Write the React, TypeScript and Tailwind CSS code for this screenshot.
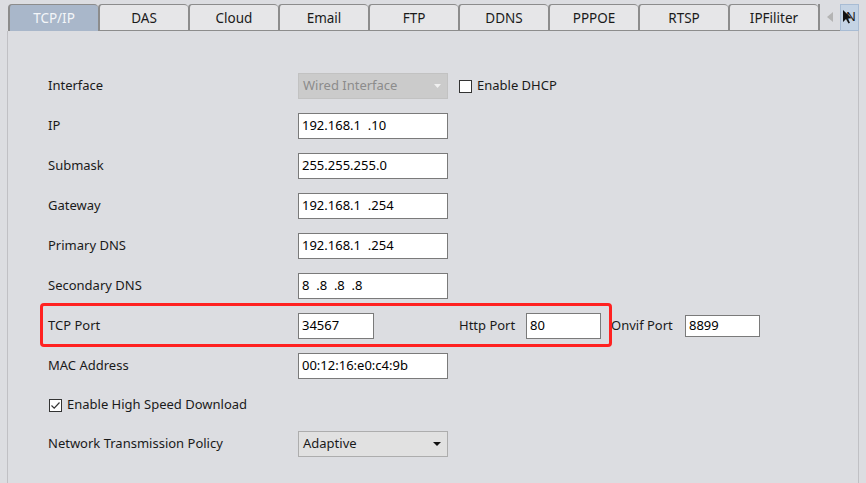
import React from "react";

const tabs = ["TCP/IP", "DAS", "Cloud", "Email", "FTP", "DDNS", "PPPOE", "RTSP", "IPFiliter"];

function Input({ value, w = "w-[150px]", h = "h-[26px]" }: { value: string; w?: string; h?: string }) {
  return (
    <div className={`${w} ${h} bg-white border border-[#7a7a7a] flex items-center pl-[3px] text-[13px] text-black whitespace-pre`}>
      {value}
    </div>
  );
}

function Row({ label, children }: { label: string; children?: React.ReactNode }) {
  return (
    <div className="h-[40px] flex items-center">
      <div className="w-[250px] text-[13px] text-[#1a1a1a]">{label}</div>
      {children}
    </div>
  );
}

function Check({ checked }: { checked?: boolean }) {
  return (
    <div className="w-[13px] h-[13px] border border-[#333] bg-white flex items-center justify-center">
      {checked && (
        <svg width="11" height="11" viewBox="0 0 11 11">
          <path d="M1.5 5.5 L4.2 8.2 L9.5 2.5" fill="none" stroke="#333" strokeWidth="1.2" />
        </svg>
      )}
    </div>
  );
}

export default function App() {
  return (
    <div
      className="w-[866px] h-[483px] bg-[#dcdde1] relative overflow-hidden"
      style={{ fontFamily: '"Noto Sans", "Open Sans", sans-serif' }}
    >
      {/* tab bar */}
      <div className="flex pl-[8px] pt-[4px] h-[31px]">
        {tabs.map((t, i) => (
          <div
            key={t}
            className={`w-[90px] h-[27px] flex items-center justify-center pt-[1px] text-[13.5px] border-t border-l-2 border-[#8c8c8c] rounded-t-[4px] ${
              i === 0 ? "bg-[#a9b7ca] text-[#f4f6f9] border-l-0" : "bg-[#e6e6e8] text-[#1a1a1a] border-b border-b-[#8c8c8c]"
            }`}
          >
            {t}
          </div>
        ))}
        <div className="w-[41px] h-[27px] flex items-center border-l-2 border-[#8c8c8c] border-b border-b-[#8c8c8c]">
          <div className="w-[20px] flex justify-center">
            <svg width="6" height="10" viewBox="0 0 6 10">
              <path d="M6 0 L0 5 L6 10 Z" fill="#b4b4b4" />
            </svg>
          </div>
          <div className="w-[19px] h-[27px] bg-[#c4d3e4] border border-[#a8bcd4] flex items-center justify-start overflow-hidden">
            <svg width="10" height="14" viewBox="0 0 10 14" className="ml-[1px]">
              <path d="M1 0 L1 12 L4 9 L6.5 13.5 L8 12.8 L5.6 8.4 L9.5 8.3 Z" fill="#111" />
            </svg>
            <span className="text-[13px] text-[#1a1a1a] -ml-[6px]">N</span>
          </div>
        </div>
      </div>

      {/* content panel */}
      <div className="ml-[7px] w-[852px] h-[452px] border-l border-r border-[#c0c0c4] pl-[40px] pt-[35px]">
        <Row label="Interface">
          <div className="w-[150px] h-[26px] bg-[#cbcbcb] border border-[#c2c2c2] flex items-center justify-between pl-[4px] pr-[6px] text-[13px] text-[#8c8c8c]">
            <span>Wired Interface</span>
            <svg width="7" height="4" viewBox="0 0 7 4">
              <path d="M0 0 L7 0 L3.5 4 Z" fill="#f0f0f0" />
            </svg>
          </div>
          <div className="flex items-center ml-[11px] gap-[5px]">
            <Check />
            <span className="text-[13px] text-[#1a1a1a]">Enable DHCP</span>
          </div>
        </Row>
        <Row label="IP"><Input value="192.168.1  .10" /></Row>
        <Row label="Submask"><Input value="255.255.255.0" /></Row>
        <Row label="Gateway"><Input value="192.168.1  .254" /></Row>
        <Row label="Primary DNS"><Input value="192.168.1  .254" /></Row>
        <Row label="Secondary DNS"><Input value="8  .8  .8  .8" /></Row>
        <div className="h-[40px] flex items-center relative">
          <div className="w-[250px] text-[13px] text-[#1a1a1a]">TCP Port</div>
          <Input value="34567" w="w-[76px]" />
          <span className="ml-[85px] w-[67px] text-[13px] text-[#1a1a1a]">Http Port</span>
          <Input value="80" w="w-[75px]" />
          <span className="ml-[10px] w-[74px] text-[13px] text-[#1a1a1a]">Onvif Port</span>
          <Input value="8899" w="w-[75px]" h="h-[22px]" />
          <div className="absolute left-[-8px] top-[-3px] w-[572px] h-[44px] border-[3px] border-[#ff2121] rounded-[4px] pointer-events-none" />
        </div>
        <Row label="MAC Address"><Input value="00:12:16:e0:c4:9b" /></Row>
        <div className="h-[38px] flex items-center gap-[5px] pl-[1px]">
          <Check checked />
          <span className="text-[13px] text-[#1a1a1a]">Enable High Speed Download</span>
        </div>
        <Row label="Network Transmission Policy">
          <div className="w-[150px] h-[26px] bg-[#e1e1e1] border border-[#adadad] flex items-center justify-between pl-[4px] pr-[6px] text-[13px] text-[#1a1a1a]">
            <span>Adaptive</span>
            <svg width="8" height="4" viewBox="0 0 8 4">
              <path d="M0 0 L8 0 L4 4 Z" fill="#111" />
            </svg>
          </div>
        </Row>
      </div>
    </div>
  );
}
